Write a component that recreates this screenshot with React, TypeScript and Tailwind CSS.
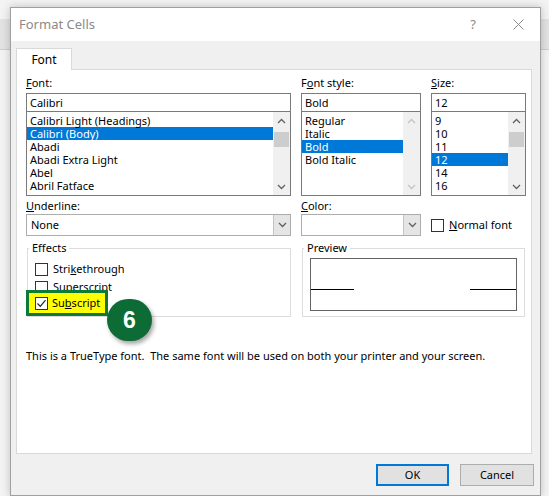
const fontItems = [
  "Calibri Light (Headings)",
  "Calibri (Body)",
  "Abadi",
  "Abadi Extra Light",
  "Abel",
  "Abril Fatface",
];
const styleItems = ["Regular", "Italic", "Bold", "Bold Italic"];
const sizeItems = ["9", "10", "11", "12", "14", "16"];

function Chevron({ up, color }: { up?: boolean; color: string }) {
  return (
    <svg width="9" height="6" viewBox="0 0 9 6">
      <path
        d={up ? "M1 5 L4.5 1.5 L8 5" : "M1 1 L4.5 4.5 L8 1"}
        fill="none"
        stroke={color}
        strokeWidth="1.3"
      />
    </svg>
  );
}

function ScrollBar({ disabled }: { disabled?: boolean }) {
  const c = disabled ? "#c4c4c4" : "#606060";
  return (
    <div className="flex w-[17px] flex-col bg-[#f0f0f0]">
      <div className="flex h-[17px] items-center justify-center">
        <Chevron up color={c} />
      </div>
      {disabled ? (
        <div className="flex-1" />
      ) : (
        <div className="flex-1 pt-[3px]">
          <div className="mx-auto h-[15px] w-[15px] bg-[#cdcdcd]" />
        </div>
      )}
      <div className="flex h-[17px] items-center justify-center">
        <Chevron color={c} />
      </div>
    </div>
  );
}

function ComboList({
  value,
  items,
  selected,
  disabled,
}: {
  value: string;
  items: string[];
  selected: number;
  disabled?: boolean;
}) {
  return (
    <div className="flex flex-col">
      <div className="h-[19px] border border-[#7a7a7a] px-[3px] leading-[17px]">{value}</div>
      <div className="flex h-[84px] border border-t-0 border-[#7a7a7a]">
        <div className="flex-1 overflow-hidden pt-[2px]">
          {items.map((it, i) => (
            <div
              key={it}
              className={
                i === selected
                  ? "h-[13px] bg-[#0078d7] px-[3px] leading-[13px] text-white"
                  : "h-[13px] px-[3px] leading-[13px]"
              }
            >
              {it}
            </div>
          ))}
        </div>
        <ScrollBar disabled={disabled} />
      </div>
    </div>
  );
}

function Select({ value }: { value: string }) {
  return (
    <div className="flex h-[22px] border border-[#adadad] bg-white">
      <div className="flex-1 px-[4px] leading-[20px]">{value}</div>
      <div className="flex w-[17px] items-center justify-center border-l border-[#c4c4c4] bg-[#e5e5e5]">
        <Chevron color="#606060" />
      </div>
    </div>
  );
}

function Box({ checked }: { checked?: boolean }) {
  return (
    <div className="flex h-[13px] w-[13px] shrink-0 items-center justify-center border border-[#333333] bg-white">
      {checked && (
        <svg width="11" height="11" viewBox="0 0 11 11">
          <path d="M1.5 5.5 L4.3 8.3 L9.5 2.2" fill="none" stroke="#222222" strokeWidth="1.2" />
        </svg>
      )}
    </div>
  );
}

export default function App() {
  return (
    <div className="relative h-[496px] w-[549px] overflow-hidden bg-[#f3f3f3] font-['Segoe_UI','Noto_Sans',sans-serif] text-[11px] text-black">
      <div className="absolute left-0 right-0 top-[19px] h-[31px] border-b border-[#cdcdcd] bg-[#e2e2e2]" />
      <div className="relative ml-[10px] pt-[7px]">
        <div className="flex h-[489px] w-[531px] flex-col border border-[#a0a0a0] bg-[#f0f0f0] shadow-[0_0_8px_rgba(0,0,0,0.22)]">
          {/* title bar */}
          <div className="flex h-[33px] items-center bg-white pl-[8px]">
            <span className="text-[13px] text-[#8a8a8a]">Format Cells</span>
            <div className="ml-auto flex h-full items-center">
              <div className="flex w-[46px] items-center justify-center text-[13px] text-[#8a8a8a]">?</div>
              <div className="flex w-[44px] items-center justify-center">
                <svg width="11" height="11" viewBox="0 0 11 11">
                  <path d="M0.5 0.5 L10.5 10.5 M10.5 0.5 L0.5 10.5" stroke="#8a8a8a" strokeWidth="1" />
                </svg>
              </div>
            </div>
          </div>

          {/* tabs + panel */}
          <div className="pl-[5px] pt-[7px]">
            <div className="relative z-10 -mb-px flex h-[22px] w-[56px] items-center justify-center border border-b-0 border-[#d9d9d9] bg-white text-[12px]">
              Font
            </div>
            <div className="h-[385px] w-[516px] border border-[#d9d9d9] bg-white pl-[9px] pt-[6px]">
              {/* row 1 */}
              <div className="flex gap-[10px]">
                <div className="w-[265px]">
                  <div className="mb-[3px] h-[14px] leading-[14px]">
                    <u>F</u>ont:
                  </div>
                  <ComboList value="Calibri" items={fontItems} selected={1} />
                </div>
                <div className="w-[120px]">
                  <div className="mb-[3px] h-[14px] leading-[14px]">
                    F<u>o</u>nt style:
                  </div>
                  <ComboList value="Bold" items={styleItems} selected={2} disabled />
                </div>
                <div className="w-[95px]">
                  <div className="mb-[3px] h-[14px] leading-[14px]">
                    <u>S</u>ize:
                  </div>
                  <ComboList value="12" items={sizeItems} selected={3} />
                </div>
              </div>

              {/* row 2 */}
              <div className="mt-[3px] flex gap-[10px]">
                <div className="w-[265px]">
                  <div className="mb-[1px] h-[14px] leading-[14px]">
                    <u>U</u>nderline:
                  </div>
                  <Select value="None" />
                </div>
                <div className="w-[120px]">
                  <div className="mb-[1px] h-[14px] leading-[14px]">
                    <u>C</u>olor:
                  </div>
                  <Select value="" />
                </div>
                <div className="w-[95px]">
                  <div className="mb-[1px] h-[14px]" />
                  <div className="flex h-[22px] items-center gap-[5px]">
                    <Box />
                    <span className="whitespace-nowrap">
                      <u>N</u>ormal font
                    </span>
                  </div>
                </div>
              </div>

              {/* row 3: group boxes */}
              <div className="mt-[5px] flex gap-[10px]">
                <fieldset className="ml-[1px] w-[264px] border border-[#dcdcdc] pb-0">
                  <legend className="ml-[1px] px-[3px] leading-[14px]">Effects</legend>
                  <div className="pl-[7px] pt-[8px]">
                    <div className="flex h-[13px] items-center gap-[5px]">
                      <Box />
                      <span>
                        Stri<u>k</u>ethrough
                      </span>
                    </div>
                    <div className="mt-[5px] flex h-[13px] items-center gap-[5px]">
                      <Box />
                      <span>
                        Sup<u>e</u>rscript
                      </span>
                    </div>
                  </div>
                  <div className="relative z-10 -mb-[2px] -ml-[2px] -mt-[4px] h-[26px] w-[82px] bg-[#0d7a37] p-[3px]">
                    <div className="flex h-full items-center gap-[4px] bg-[#ffff00] pl-[6px]">
                      <Box checked />
                      <span>
                        Su<u>b</u>script
                      </span>
                    </div>
                    <div className="absolute left-[81px] top-[9px] flex h-[42px] w-[45px] items-center justify-center rounded-full bg-[#0d6b36] font-['Liberation_Sans',sans-serif] text-[23px] font-bold text-white shadow-[2px_3px_4px_rgba(0,0,0,0.35)]">
                      6
                    </div>
                  </div>
                </fieldset>
                <fieldset className="ml-[1px] w-[223px] border border-[#dcdcdc]">
                  <legend className="ml-[1px] px-[3px] leading-[14px]">Preview</legend>
                  <div className="mb-[5px] ml-[7px] mt-[3px] flex h-[53px] w-[207px] items-start justify-between border border-[#646464] pt-[30px]">
                    <div className="h-px w-[43px] bg-black" />
                    <div className="h-px w-[46px] bg-black" />
                  </div>
                </fieldset>
              </div>

              <div className="mt-[32px] h-[14px] leading-[14px]">
                This is a TrueType font.&nbsp; The same font will be used on both your printer and your screen.
              </div>
            </div>
          </div>

          {/* buttons */}
          <div className="mt-[10px] flex justify-end gap-[11px] pr-[6px]">
            <div className="flex h-[22px] w-[73px] items-center justify-center border-2 border-[#0078d7] bg-[#e1e1e1]">
              OK
            </div>
            <div className="flex h-[22px] w-[74px] items-center justify-center border border-[#adadad] bg-[#e1e1e1]">
              Cancel
            </div>
          </div>
        </div>
      </div>
    </div>
  );
}
